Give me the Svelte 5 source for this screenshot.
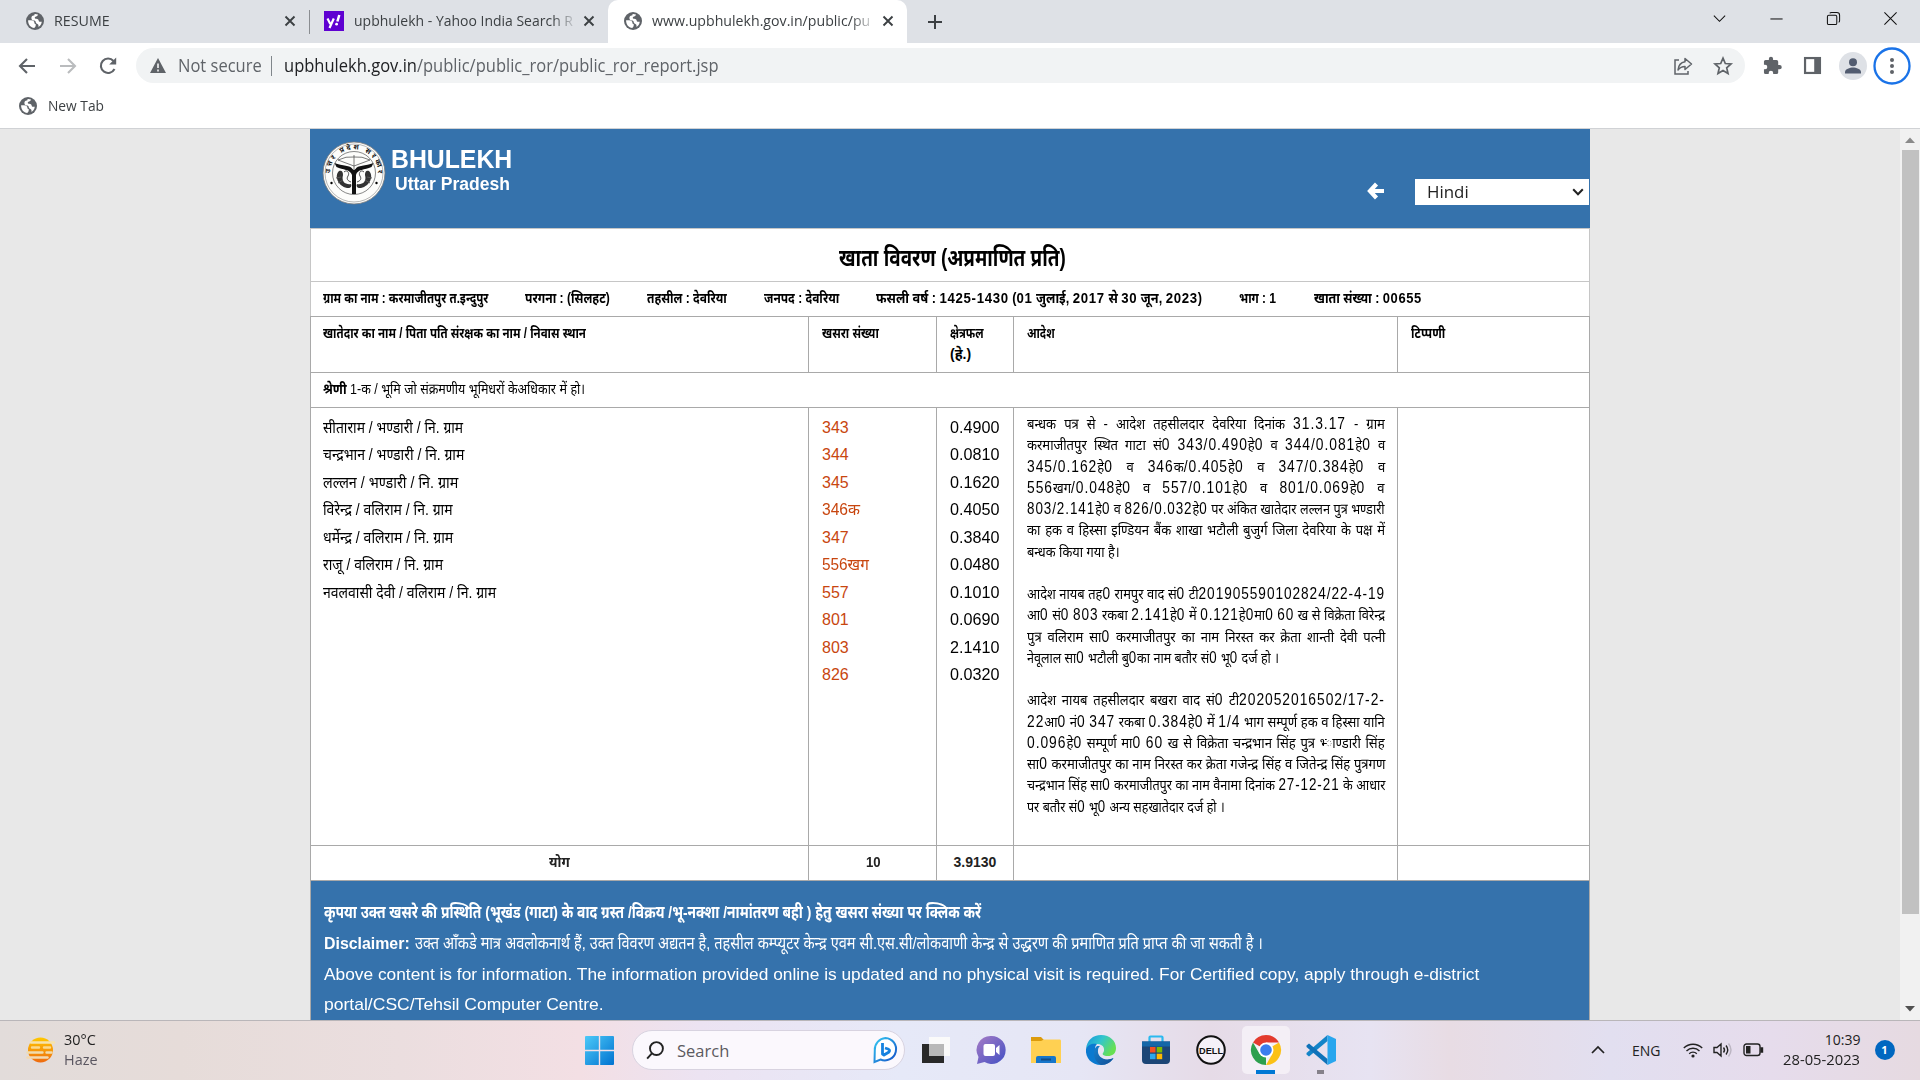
<script>
  // Scales a run of text horizontally so that it occupies the given width.
  function fit(node, width) {
    const natural = node.offsetWidth;
    if (!natural) return;
    node.style.transform = `scaleX(${width / natural})`;
    node.style.marginRight = `${width - natural}px`;
  }

  // Justifies one line: condenses it slightly, then widens its word gaps to fill the width.
  function justify(node, width) {
    const natural = node.offsetWidth;
    if (!natural) return;
    const scale = Math.min(0.87, width / natural);
    const gaps = node.textContent.split(' ').length - 1;
    node.style.wordSpacing = `${(width / scale - natural) / gaps}px`;
    node.style.transform = `scaleX(${scale})`;
    node.style.marginRight = `${width - width / scale}px`;
  }

  // Splits a line so that every odd part is a number.
  const runs = (text) => text.split(/([0-9./-]*[0-9][0-9./-]*)/);

  const info = [
    ['ग्राम का नाम : करमाजीतपुर त.इन्दुपुर', 165],
    ['परगना : (सिलहट)', 85],
    ['तहसील : देवरिया', 80],
    ['जनपद : देवरिया', 75],
    ['फसली वर्ष : 1425-1430 (01 जुलाई, 2017 से 30 जून, 2023)', 326],
    ['भाग : 1', 38],
    ['खाता संख्या : 00655', 108]
  ];
  const names = [
    ['सीताराम / भण्डारी / नि. ग्राम', 140],
    ['चन्द्रभान / भण्डारी / नि. ग्राम', 141],
    ['लल्लन / भण्डारी / नि. ग्राम', 135],
    ['विरेन्द्र / वलिराम / नि. ग्राम', 130],
    ['धर्मेन्द्र / वलिराम / नि. ग्राम', 130],
    ['राजू / वलिराम / नि. ग्राम', 120],
    ['नवलवासी देवी / वलिराम / नि. ग्राम', 173]
  ];
  const plots = [
    ['343', '0.4900', 27], ['344', '0.0810', 27], ['345', '0.1620', 27], ['346क', '0.4050', 38],
    ['347', '0.3840', 27], ['556खग', '0.0480', 47], ['557', '0.1010', 27], ['801', '0.0690', 27],
    ['803', '2.1410', 27], ['826', '0.0320', 27]
  ];
  // Each order is a list of justified lines; the closing line carries its own width.
  const orders = [
    {
      lines: [
        'बन्धक पत्र से - आदेश तहसीलदार देवरिया दिनांक 31.3.17 - ग्राम',
        'करमाजीतपुर स्थित गाटा सं0 343/0.490हे0 व 344/0.081हे0 व',
        '345/0.162हे0 व 346क/0.405हे0 व 347/0.384हे0 व',
        '556खग/0.048हे0 व 557/0.101हे0 व 801/0.069हे0 व',
        '803/2.141हे0 व 826/0.032हे0 पर अंकित खातेदार लल्लन पुत्र भण्डारी',
        'का हक व हिस्सा इण्डियन बैंक शाखा भटौली बुजुर्ग जिला देवरिया के पक्ष में'
      ],
      last: 'बन्धक किया गया है।',
      width: 93
    },
    {
      lines: [
        'आदेश नायब तह0 रामपुर वाद सं0 टी201905590102824/22-4-19',
        'आ0 सं0 803 रकबा 2.141हे0 में 0.121हे0मा0 60 ख से विक्रेता विरेन्द्र',
        'पुत्र वलिराम सा0 करमाजीतपुर का नाम निरस्त कर क्रेता शान्ती देवी पत्नी'
      ],
      last: 'नेवूलाल सा0 भटौली बु0का नाम बतौर सं0 भू0 दर्ज हो ।',
      width: 252
    },
    {
      lines: [
        'आदेश नायब तहसीलदार बखरा वाद सं0 टी202052016502/17-2-',
        '22आ0 नं0 347 रकबा 0.384हे0 में 1/4 भाग सम्पूर्ण हक व हिस्सा यानि',
        '0.096हे0 सम्पूर्ण मा0 60 ख से विक्रेता चन्द्रभान सिंह पुत्र भ्‍ाण्डारी सिंह',
        'सा0 करमाजीतपुर का नाम निरस्त कर क्रेता गजेन्द्र सिंह व जितेन्द्र सिंह पुत्रगण',
        'चन्द्रभान सिंह सा0 करमाजीतपुर का नाम वैनामा दिनांक 27-12-21 के आधार'
      ],
      last: 'पर बतौर सं0 भू0 अन्य सहखातेदार दर्ज हो ।',
      width: 198
    }
  ];
  const ORDER_WIDTH = 358;
</script>

{#snippet mixed(text)}{#each runs(text) as part, i}{#if i % 2}<span class="num">{part}</span>{:else}{part}{/if}{/each}{/snippet}
{#snippet globe()}
  <svg class="globe" viewBox="0 0 18 18"><circle cx="9" cy="9" r="9" fill="#5f6368" /><path d="M2.1 8.2 5 8.3c2.3.1 3.4.9 3.4 2.4 0 .9.5 1.2 1.3 1.3v1.5c0 1-.6 1.4-1.4 2.5C4.700 15.700 2 12.500 2.100 8.200ZM8.500 1.900C9.600 1.800 11 2 12 2.600c-.2 1.300-.9 1.700-2 1.800-.8.1-1.200.5-1.200 1.300 0 .7.5 1 1.300 1 2.100 0 2.500 1 2.600 2.100.1.700.6 1 1.200 1h1.900c-.4 2.400-1.600 4.300-3.300 5.200.2-1.800-.2-2.900-1.500-3.300-.9-.3-1.100-.7-1.200-1.400-.1-1.400-.8-1.900-2.100-1.900-1.500 0-2.300-.8-2.300-2.300 0-1.600.9-2.300 2.100-2.500.8-.2 1.200-.7 1-1.700Z" fill="#fff" /></svg>
{/snippet}
{#snippet cross()}
  <svg class="cross" viewBox="0 0 12 12"><path d="m1.500 1.500 9 9m0-9-9 9" stroke="#3c4043" stroke-width="1.900" /></svg>
{/snippet}

<div class="screen">
  <div class="tabs">
    <div class="tab t1">{@render globe()}<div class="label"><span class="f" use:fit={56}>RESUME</span></div>{@render cross()}</div>
    <div class="tab t2">
      <svg class="yahoo" viewBox="0 0 20 20"><rect width="20" height="20" fill="#5f01d1" /><path d="m3.500 7.500 2.800 5.500M9.800 7.500 5.500 17" stroke="#fff" stroke-width="2.200" /><path d="m15.300 4-1.900 6.500" stroke="#fff" stroke-width="2.500" /><circle cx="12.600" cy="13.200" r="1.400" fill="#fff" /></svg>
      <div class="label faded"><span class="f" use:fit={219}>upbhulekh - Yahoo India Search R</span></div>{@render cross()}
    </div>
    <div class="tab t3">{@render globe()}<div class="label faded"><span class="f" use:fit={218}>www.upbhulekh.gov.in/public/pu</span></div>{@render cross()}</div>
    <svg class="plus" viewBox="0 0 16 16"><path d="M8 1v14M1 8h14" stroke="#3c4043" stroke-width="2" /></svg>
    <div class="window">
      <svg viewBox="0 0 16 16"><path d="m2 5 6 6 6-6" /></svg>
      <svg viewBox="0 0 16 16"><path d="M1.500 8.500h13" /></svg>
      <svg viewBox="0 0 16 16"><rect x="1.500" y="4.500" width="10" height="10" rx="1.500" /><path d="M4 2.500Q4.500 1.500 6 1.500h5.500q3 0 3 3V10q0 1.500-1 2" /></svg>
      <svg viewBox="0 0 16 16"><path d="m1.500 1.500 13 13m0-13-13 13" /></svg>
    </div>
  </div>

  <div class="toolbar">
    <svg class="nav" viewBox="0 0 20 20"><path d="M18 10H3m7-7-7 7 7 7" stroke="#5f6368" /></svg>
    <svg class="nav" viewBox="0 0 20 20"><path d="M2 10h15m-7-7 7 7-7 7" stroke="#babcbe" /></svg>
    <svg class="nav" viewBox="0 0 20 20"><path d="M16.500 13A7.200 7.200 0 1 1 15.500 5" stroke="#5f6368" /><path d="M18.200 1.500v7h-7z" fill="#5f6368" /></svg>
    <div class="omnibox">
      <svg class="warn" viewBox="0 0 16 15"><path d="M8 0 16 15H0Z" fill="#5f6368" /><path d="M8 5.500v4.500M8 11.500v2" stroke="#fff" stroke-width="1.500" /></svg>
      <span class="f secure" use:fit={84}>Not secure</span>
      <i class="bar"></i>
      <span class="f url" use:fit={435}><b>upbhulekh.gov.in</b>/public/public_ror/public_ror_report.jsp</span>
      <svg class="share" viewBox="0 0 20 20"><path d="M6 4H2v14h13v-3" /><path d="M12 2.500 18.500 8 12 13.500V10.500C8.500 10.500 6.500 12 5 14c.4-4.500 3-7.500 7-8.200Z" stroke-linejoin="round" /></svg>
      <svg class="star" viewBox="0 0 20 20"><path d="m10 2.200 2.300 5.300 5.700.5-4.300 3.800 1.300 5.600-5-3-5 3 1.300-5.600L2 8l5.700-.5Z" /></svg>
    </div>
    <svg class="ext" viewBox="0 0 20 20"><path d="M17.500 9.500H16V6a1.800 1.800 0 0 0-1.800-1.800h-3.600V3a2.200 2.200 0 0 0-4.400 0v1.200H2.700A1.700 1.700 0 0 0 1 6v3.300h1.200a2.300 2.300 0 0 1 0 4.700H1v3.300A1.700 1.700 0 0 0 2.700 19H6v-1.200a2.300 2.300 0 0 1 4.700 0V19h3.500a1.800 1.800 0 0 0 1.800-1.700V14h1.500a2.200 2.200 0 0 0 0-4.500Z" fill="#5f6368" /></svg>
    <svg class="ext" viewBox="0 0 20 20"><path d="M1 1h18v18H1Z" fill="#5f6368" /><path d="M3.300 3.300h8.500v13.400H3.300Z" fill="#fff" /></svg>
    <svg class="avatar" viewBox="0 0 28 28"><circle cx="14" cy="14" r="14" fill="#dee1e6" /><circle cx="14" cy="10.300" r="4" fill="#525c70" /><path d="M6 21.500v-1.500c0-3 5-4.500 8-4.500s8 1.500 8 4.500v1.500Z" fill="#525c70" /></svg>
    <svg class="menu" viewBox="0 0 38 38"><circle cx="19" cy="19" r="17.500" fill="#fff" stroke="#1a73e8" stroke-width="2.300" /><g fill="#5f6368"><circle cx="19" cy="13" r="2" /><circle cx="19" cy="19" r="2" /><circle cx="19" cy="25" r="2" /></g></svg>
  </div>
  <div class="bookmarks">{@render globe()}<span class="f" use:fit={56}>New Tab</span></div>

  <div class="viewport">
    <main>
      <header>
        <svg class="emblem" viewBox="0 0 64 64">
          <defs><path id="rim" d="M10.500 43A24 24 0 1 1 53.500 43" /></defs>
          <circle cx="32" cy="32" r="31" fill="#fdfdfb" stroke="#777" stroke-width=".8" />
          <circle cx="32" cy="32" r="29" fill="none" stroke="#888" stroke-width=".6" />
          <circle cx="32" cy="32" r="21.500" fill="none" stroke="#555" stroke-width=".7" />
          <text><textPath href="#rim" startOffset="50%" text-anchor="middle" textLength="75">उत्तर प्रदेश सरकार</textPath></text>
          <path d="M16 19q8-4 16-3 8-1 16 3M16 19l16 6 16-6M32 14v14" fill="none" stroke="#444" stroke-width=".7" />
          <path d="M12.500 22c8 3 16 2 18 6 .6 1 2.400 1 3 0 2-4 10-3 18-6l-2 4c-7 3-14 2-15.500 8v19h-4V34C28 28 21 29 14.500 26Z" fill="#111" />
          <path d="M17 30c-5 5-1 15 8 17 4 .5 5-2 4-4-5 1-10-2-8-9 0-3-1-5-4-4Zm30 0c5 5 1 15-8 17-4 .5-5-2-4-4 5 1 10-2 8-9 0-3 1-5 4-4Z" fill="#333" />
          <path d="M22 31c3-3 6 1 4 4s0 5 3 6M42 31c-3-3-6 1-4 4s0 5-3 6M14 37l5-1m-3 6 5-3m29-2-5-1m3 6-5-3" fill="none" stroke="#555" />
          <circle cx="9.500" cy="42" r="1.200" /><circle cx="54.500" cy="42" r="1.200" />
        </svg>
        <div class="brand">
          <div class="b1"><span class="f" use:fit={121}>BHULEKH</span></div>
          <div class="b2"><span class="f" use:fit={115}>Uttar Pradesh</span></div>
        </div>
        <svg class="back" viewBox="0 0 18 18"><path d="M9.500 2 3 9l6.500 7M4 9h13" fill="none" stroke="#fff" stroke-width="4.200" /></svg>
        <div class="select"><span class="f" use:fit={42}>Hindi</span><svg viewBox="0 0 12 8"><path d="m1.200 1.200 4.800 5 4.800-5" fill="none" stroke="#222" stroke-width="2" /></svg></div>
      </header>

      <div class="title"><span class="f" use:fit={227}>खाता विवरण (अप्रमाणित प्रति)</span></div>
      <div class="info">{#each info as [text, width]}<span class="f" use:fit={width}>{@render mixed(text)}</span>{/each}</div>

      <div class="row heads">
        <div><span class="f" use:fit={263}>खातेदार का नाम / पिता पति संरक्षक का नाम / निवास स्थान</span></div>
        <div><span class="f" use:fit={57}>खसरा संख्या</span></div>
        <div><span class="f" use:fit={34}>क्षेत्रफल</span><br /><span class="f" use:fit={21}>(हे.)</span></div>
        <div><span class="f" use:fit={28}>आदेश</span></div>
        <div><span class="f" use:fit={34}>टिप्पणी</span></div>
      </div>
      <div class="class-row"><span class="f" use:fit={262}><b>श्रेणी</b> 1-क / भूमि जो संक्रमणीय भूमिधरों केअधिकार में हो।</span></div>

      <div class="row body">
        <div class="list">{#each names as [text, width]}<p><span class="f" use:fit={width}>{text}</span></p>{/each}</div>
        <div class="list plot">{#each plots as [no, , width]}<p><span class="f" use:fit={width}>{no}</span></p>{/each}</div>
        <div class="list">{#each plots as [, area]}<p><span class="f" use:fit={49.500}>{area}</span></p>{/each}</div>
        <div class="orders">
          {#each orders as order}
            <section>
              {#each order.lines as line}<p><span class="f" use:justify={ORDER_WIDTH}>{@render mixed(line)}</span></p>{/each}
              <p><span class="f" use:fit={order.width}>{@render mixed(order.last)}</span></p>
            </section>
          {/each}
        </div>
        <div></div>
      </div>
      <div class="row total">
        <div><span class="f" use:fit={21}>योग</span></div>
        <div><span class="f" use:fit={15}>10</span></div>
        <div><span class="f" use:fit={43}>3.9130</span></div>
        <div></div><div></div>
      </div>
      <footer>
        <p><b class="f" use:fit={657}>कृपया उक्त खसरे की प्रस्थिति (भूखंड (गाटा) के वाद ग्रस्त /विक्रय /भू-नक्शा /नामांतरण बही ) हेतु खसरा संख्या पर क्लिक करें</b></p>
        <p class="disclaimer"><b class="f" use:fit={86}>Disclaimer:</b><span class="f" use:fit={848}>उक्त आँकडे मात्र अवलोकनार्थ हैं, उक्त विवरण अद्यतन है, तहसील कम्प्यूटर केन्द्र एवम सी.एस.सी/लोकवाणी केन्द्र से उद्धरण की प्रमाणित प्रति प्राप्त की जा सकती है ।</span></p>
        <p><span class="f" use:fit={1155}>Above content is for information. The information provided online is updated and no physical visit is required. For Certified copy, apply through e-district</span></p>
        <p><span class="f" use:fit={279.500}>portal/CSC/Tehsil Computer Centre.</span></p>
      </footer>
    </main>
    <div class="scroll">
      <svg viewBox="0 0 10 6"><path d="m0 6 5-5.500L10 6Z" fill="#8a8a8a" /></svg>
      <i></i>
      <svg viewBox="0 0 10 6"><path d="m0 0 5 5.500L10 0Z" fill="#505050" /></svg>
    </div>
  </div>

  <div class="taskbar">
    <svg class="weather" viewBox="0 0 28 28"><defs><linearGradient id="sun" x2="0" y2="1"><stop stop-color="#ffc800" /><stop offset="1" stop-color="#ee6a10" /></linearGradient></defs><circle cx="14.500" cy="14" r="12.500" fill="url(#sun)" /><g stroke-linecap="round" stroke-width="2.400"><path d="M5 6.500h8M11 6.500h17" stroke="#f6e3ac" /><path d="M6 11.500h7m5 0h6" stroke="#fbd98c" /><path d="M1.500 16.500h15m4 0h5" stroke="#f0dcae" /><path d="M1.500 21.500h20" stroke="#f3d9b0" /></g></svg>
    <div class="temp"><span class="f" use:fit={32}>30°C</span><span class="f haze" use:fit={34}>Haze</span></div>
    <svg class="start" viewBox="0 0 29 29"><defs><linearGradient id="win" x2="1" y2="1"><stop stop-color="#4cc9f8" /><stop offset="1" stop-color="#0072d0" /></linearGradient></defs><path d="M1 0h12.800v13.800H0V1Q0 0 1 0Zm14.200 0H28q1 0 1 1v12.800H15.200ZM0 15.200h13.800V29H1q-1 0-1-1Zm15.200 0H29V28q0 1-1 1H15.200Z" fill="url(#win)" /></svg>
    <div class="search">
      <svg class="mag" viewBox="0 0 20 20"><circle cx="11" cy="8" r="6.800" /><path d="m6.200 13-5 5.500" /></svg>
      <span class="f" use:fit={52}>Search</span>
      <svg class="bing" viewBox="0 0 26 28"><defs><linearGradient id="bg" x2="1" y2="1"><stop stop-color="#35c9f2" /><stop offset="1" stop-color="#134fc7" /></linearGradient></defs><path d="M13.500 2a11.200 11.200 0 1 1-5 21.500L2.500 26l.3-12A11.500 11.500 0 0 1 13.500 2Z" fill="#fff" stroke="url(#bg)" stroke-width="2" /><path d="M10.500 7v11l1.500 1 5-3q1.500-2-1-3l-3-1" fill="none" stroke="#1682df" stroke-width="2.800" stroke-linejoin="round" /></svg>
    </div>
    <div class="apps">
      <div><svg viewBox="0 0 30 30"><path d="M1 9h22v19H1Z" fill="#292929" /><path d="M8 2h21v19H8Z" fill="#fafafa" /><path d="M8 9h15v12H8Z" fill="#b8b8b8" /></svg></div>
      <div><svg viewBox="0 0 30 30"><defs><linearGradient id="chat" x2="1" y2="1"><stop stop-color="#a67bc5" /><stop offset="1" stop-color="#4250c4" /></linearGradient></defs><path d="M15 1a14 14 0 1 1-6.500 26L1 29l1.500-7A14 14 0 0 1 15 1Z" fill="url(#chat)" /><rect x="7.500" y="9" width="11.500" height="12" rx="2" fill="#fff" /><path d="m20 13 3.500-3v10L20 17Z" fill="#fff" /></svg></div>
      <div><svg viewBox="0 0 30 30"><path d="M0 2h10l3 3h15v10H0Z" fill="#dc9b0c" /><path d="M0 6h10l3-1.500h16Q30 4.500 30 6v22H0Z" fill="#ffd052" /><path d="M5 28v-5q0-2 2-2h16q2 0 2 2v5Z" fill="#1676ca" /><path d="M10 24.500h10" stroke="#124b85" stroke-width="2" /></svg></div>
      <div><svg viewBox="0 0 30 30"><defs><linearGradient id="e1" x2="1" y2=".5"><stop stop-color="#1493dc" /><stop offset=".5" stop-color="#32c5cd" /><stop offset="1" stop-color="#67e052" /></linearGradient><linearGradient id="e2" x2="1" y2="1"><stop stop-color="#1782cf" /><stop offset="1" stop-color="#124d93" /></linearGradient></defs><path d="M0 14C1 5 7 0 15 0c9 0 15 6 15 13 0 6-4 8-8 8-5 0-6-2-5-3 2-2 2-9-6-9C6 9 2 11 0 14Z" fill="url(#e1)" /><path d="M0 14C2 9 7 8 11 9c-5 5 0 16 9 16 3 0 5-1 7.500-2C25 27 20.500 30 15 30 6 30-1 23 0 14Z" fill="#0b7ad0" /><path d="M11 11c-5 4-4 15 4 19 6 0 10-3 12.500-7C19 27 11 22 12 15c0-2 1-3 2-4Z" fill="url(#e2)" /></svg></div>
      <div><svg viewBox="0 0 30 30"><path d="M8.500 8V2.500q0-1 1-1h11q1 0 1 1V8" fill="none" stroke="#2bb9ef" stroke-width="2.200" /><path d="M1 6.500h28V25q0 4-4 4H5q-4 0-4-4Z" fill="#1c4676" /><path d="M1 6.500h28v5H1Z" fill="#1467a8" /><path d="M9 12h5.500v5.500H9Z" fill="#f25022" /><path d="M15.700 12h5.500v5.500h-5.500Z" fill="#7fba00" /><path d="M9 18.700h5.500v5.500H9Z" fill="#2aa8ed" /><path d="M15.700 18.700h5.500v5.500h-5.500Z" fill="#ffb900" /></svg></div>
      <div><svg viewBox="0 0 30 30"><circle cx="15" cy="15" r="13.800" fill="#f5f1f8" stroke="#111" stroke-width="2" /><text class="dell" x="15" y="18.500" text-anchor="middle" textLength="24" lengthAdjust="spacingAndGlyphs">DELL</text></svg></div>
      <div class="on"><svg viewBox="0 0 30 30"><path d="M15 15 2 7.500A15 15 0 0 1 28 7.500H15Z" fill="#e33b2e" /><path d="m15 15 13-7.500A15 15 0 0 1 15 30l6.500-11.300Z" fill="#fbc116" /><path d="M15 15v7.500L15 30A15 15 0 0 1 2 7.500L8.500 18.700Z" fill="#2da04e" /><circle cx="15" cy="15" r="7.500" fill="#fff" /><circle cx="15" cy="15" r="5.800" fill="#3b7ded" /></svg></div>
      <div class="code"><svg viewBox="0 0 30 30"><path d="M21.500 6 3 21.500.5 19.500v-1.500L21.500 0Z" fill="#1384c8" /><path d="M21.500 24 3 8.500.5 10.500V12l21 18Z" fill="#0f72b9" /><path d="m21.500 0 8.500 4v22l-8.500 4Z" fill="#28a6ee" /></svg></div>
    </div>
    <svg class="up" viewBox="0 0 14 8"><path d="m1 7 6-6 6 6" /></svg>
    <span class="f eng" use:fit={29}>ENG</span>
    <svg class="wifi" viewBox="0 0 20 16"><path d="M.800 6a13 13 0 0 1 18.400 0M3.500 9a9.200 9.200 0 0 1 13 0M6.200 11.700a5.400 5.400 0 0 1 7.600 0" /><circle cx="10" cy="14" r="1.600" fill="#222" stroke="none" /></svg>
    <svg class="vol" viewBox="0 0 20 16"><path d="M1 5.500h3L8 2v12L4 10.500H1ZM10.500 5.500q2 2.500 0 5M13 3.500q3.500 4.500 0 9" /><path d="M15.500 1.500q5 6.500 0 13" stroke="#bbb5c2" /></svg>
    <svg class="batt" viewBox="0 0 20 14"><rect x="1" y="1" width="16" height="11.500" rx="2.500" /><path d="M3 3h4.500v7.500H3Z" fill="#222" stroke="none" /><path d="M18 5h1.500v4H18Z" fill="#222" /></svg>
    <div class="clock"><span class="f" use:fit={36}>10:39</span><span class="f" use:fit={77}>28-05-2023</span></div>
    <div class="badge">1</div>
  </div>
</div>

<style>
  :global(body) { overflow: hidden; background: #fff; }
  .screen { width: 1920px; height: 1080px; display: flex; flex-direction: column; font-family: 'Open Sans', 'Noto Sans', sans-serif; color: #3c4043; overflow: hidden; }
  .screen :global(*) { box-sizing: border-box; }
  p { margin: 0; }
  svg { flex: none; display: block; overflow: visible; }
  .f { display: inline-block; white-space: nowrap; transform-origin: 0 50%; flex: none; }

  .tabs { height: 43px; flex: none; display: flex; align-items: center; background: #dee1e6; }
  .tab { height: 43px; display: flex; align-items: center; font-size: 15px; padding-bottom: 2px; }
  .globe { width: 18px; height: 18px; }
  .label { flex: 1; margin-left: 10px; height: 24px; line-height: 23px; }
  .faded { mask-image: linear-gradient(90deg, #000 90%, rgb(0 0 0 / 0.15) 100%); }
  .cross { width: 12px; height: 12px; margin-left: 9px; }
  .t1 { width: 311px; padding-left: 26px; padding-right: 14px; border-right: 1px solid #dee1e6; background: linear-gradient(#8a8d91, #8a8d91) right 10px / 1px 24px no-repeat; }
  .t2 { width: 297px; padding-left: 13px; padding-right: 13px; }
  .yahoo { width: 20px; height: 20px; }
  .t3 { width: 299px; padding-left: 16px; padding-right: 13px; background: #fff; border-radius: 10px 10px 0 0; }
  .plus { width: 16px; height: 16px; margin-left: 20px; }
  .window { margin-left: auto; margin-right: 22px; display: flex; gap: 42px; padding-bottom: 6px; }
  .window svg { width: 15px; height: 15px; fill: none; stroke: #111; stroke-width: 1.1; }

  .toolbar { height: 45px; flex: none; display: flex; align-items: center; padding-left: 17px; background: #fff; }
  .nav { width: 20px; height: 20px; margin-right: 20.5px; fill: none; stroke-width: 2.1; }
  .omnibox { width: 1609px; height: 35px; margin-left: -3px; border-radius: 18px; background: #f1f3f4; display: flex; align-items: center; padding-left: 14px; font-size: 17.5px; line-height: 32px; color: #5f6368; }
  .warn { width: 16px; height: 15px; }
  .omnibox .f { height: 34px; }
  .secure { margin-left: 12px; }
  .bar { width: 1px; height: 20px; background: #80868b; margin: 0 12px 0 10px; }
  .url { color: #5f6368; }
  .url b { font-weight: 400; color: #202124; }
  .share { width: 20px; height: 20px; margin-left: auto; fill: none; stroke: #5f6368; stroke-width: 1.5; }
  .star { width: 20px; height: 20px; margin: 0 12px 0 20px; fill: none; stroke: #5f6368; stroke-width: 1.7; }
  .ext { width: 19px; height: 19px; margin-left: 19px; margin-right: 2px; }
  .omnibox + .ext { margin-left: 18px; }
  .avatar { width: 28px; height: 28px; margin-left: 15px; }
  .menu { width: 38px; height: 38px; margin-left: 6.5px; }
  .bookmarks { height: 41px; flex: none; display: flex; align-items: center; gap: 11px; padding: 0 0 5px 19px; border-bottom: 1px solid #d0d2d5; font-size: 14.5px; background: #fff; }

  .viewport { height: 891px; flex: none; display: flex; background: #e8e8e8; overflow: hidden; }
  main { width: 1280px; margin-left: 310px; background: #fff; color: #000; font-family: 'Liberation Sans', 'Noto Sans Devanagari', 'Noto Sans', sans-serif; display: flex; flex-direction: column; }
  header { height: 99px; flex: none; background: #3572ac; color: #fff; display: flex; align-items: flex-start; font-weight: 700; }
  .emblem { width: 64px; height: 64px; margin: 12px 0 0 11.5px; }
  .emblem text { font-size: 7px; fill: #111; }
  .brand { margin-left: 5.5px; padding-top: 16px; }
  .b1 { font-size: 25px; line-height: 29px; }
  .b2 { font-size: 18px; line-height: 21px; padding-left: 3.5px; }
  .back { width: 18px; height: 18px; margin: 53px 30px 0 auto; }
  .select { width: 174px; height: 26px; margin-top: 50px; margin-right: 1px; background: #fff; color: #222; display: flex; align-items: center; justify-content: space-between; padding: 0 5px 0 11.5px; font: 400 16.5px/24px 'Open Sans', sans-serif; }
  .select svg { width: 12px; height: 8px; }
  .title { height: 53px; flex: none; border: 1px solid #c6c6c6; border-bottom: 0; display: flex; justify-content: center; padding-left: 4px; font-weight: 700; font-size: 24px; line-height: 57px; }
  .info { height: 35px; flex: none; border: 1px solid #c6c6c6; border-bottom: 0; padding-left: 12px; display: flex; gap: 37px; font-weight: 700; font-size: 14.5px; line-height: 33px; }
  .info .num { font-size: 1.04em; letter-spacing: 0.05em; line-height: 1; }
  .row { flex: none; display: grid; grid-template-columns: 498px 128px 77px 384px 193px; border-top: 1px solid #a9a9a9; }
  .row > div { border-left: 1px solid #a9a9a9; padding-left: 13px; min-width: 0; }
  .row > div:last-child { border-right: 1px solid #a9a9a9; }
  .row > div:first-child { padding-left: 12px; }
  .heads { height: 56px; font-weight: 700; font-size: 14px; line-height: 21px; }
  .heads > div { padding-top: 6px; }
  .class-row { height: 35px; flex: none; border: 1px solid #a9a9a9; border-bottom: 0; padding-left: 12px; font-size: 15px; line-height: 31px; }
  .body { height: 438px; }
  .list { padding-top: 6px; font-size: 16px; }
  .list p { height: 27.45px; line-height: 27.45px; }
  .plot { color: #c8460f; }
  .orders { padding-top: 5px; font-size: 15px; }
  .orders .num { font-size: 1.06em; line-height: 1; letter-spacing: 0.07em; }
  .orders p { height: 21.26px; line-height: 21.26px; }
  .orders section + section { margin-top: 21.26px; }
  .total { height: 36px; border-bottom: 1px solid #a9a9a9; font-weight: 700; font-size: 14px; line-height: 33px; color: #222; }
  .row.total > div { padding-left: 0; text-align: center; }
  .row.total > div:nth-child(2) { padding-left: 1px; }
  footer { flex: 1; background: #3572ac; color: #fff; padding: 17px 0 0 13px; font-size: 17px; border: solid #a9a9a9; border-width: 0 1px; }
  footer p { height: 30.800px; line-height: 30.800px; }
  .disclaimer { display: flex; gap: 5px; }
  .scroll { width: 20px; margin-left: 310px; background: #f1f1f1; display: flex; flex-direction: column; align-items: center; }
  .scroll svg { width: 10px; height: 6px; margin-top: 8px; }
  .scroll i { width: 17px; height: 764px; background: #c1c1c1; margin: 7px 0 84px; }

  .taskbar { height: 60px; flex: none; display: flex; align-items: center; border-top: 1px solid #b9b6b9; background: linear-gradient(90deg, #e2dcda 0, #e6dcd9 180px, #ebdedf 400px, #f3dfe4 580px, #ece3f2 700px, #e6e9f8 900px, #e6e6f5 1080px, #e6dbe7 1210px, #e7e3f2 1370px, #e8dce4 1450px, #e2dff0 1610px, #e6dcec 1770px, #e6dae1 1920px); color: #222; font-size: 14px; padding-bottom: 1px; }
  .weather { width: 28px; height: 28px; margin-left: 26px; }
  .temp { width: 120px; margin-left: 10px; display: flex; flex-direction: column; align-items: flex-start; line-height: 20px; padding-bottom: 1px; }
  .haze { color: #5a5660; }
  .start { width: 29px; height: 29px; margin-left: 401px; }
  .search { width: 273px; height: 40px; margin-left: 18px; border-radius: 20px; border: 1px solid #d8d3e0; background: #fbf8fd; display: flex; align-items: center; padding: 0 6px 0 13px; font-size: 16.5px; color: #5c5a60; }
  .mag { width: 19px; height: 19px; margin-right: 12px; fill: none; stroke: #222; stroke-width: 2; }
  .bing { width: 26px; height: 28px; margin-left: auto; }
  .apps { display: flex; gap: 7px; margin-left: 6.5px; }
  .apps div { width: 48px; height: 48px; display: grid; place-items: center; border-radius: 5px; }
  .apps svg { width: 30px; height: 30px; }
  .apps .on { background: linear-gradient(#0078d4, #0078d4) center bottom / 19px 4px no-repeat, #f4eff6; }
  .apps .code { background: linear-gradient(#85818a, #85818a) center bottom / 7px 4px no-repeat; }
  .dell { font: 700 9.5px 'Liberation Sans', sans-serif; fill: #111; }
  .up { width: 14px; height: 8px; margin-left: 246.5px; fill: none; stroke: #222; stroke-width: 1.7; }
  .eng { margin-left: 27px; }
  .wifi { width: 20px; height: 16px; margin-left: 22px; }
  .vol { width: 20px; height: 16px; margin-left: 10px; }
  .batt { width: 20px; height: 14px; margin-left: 10px; }
  .wifi, .vol, .batt { fill: none; stroke: #222; stroke-width: 1.4; }
  .clock { width: 98px; display: flex; flex-direction: column; align-items: flex-end; line-height: 20px; padding-bottom: 1px; }
  .badge { width: 20px; height: 20px; margin-left: 14px; border-radius: 50%; background: #0067c0; color: #fff; font-size: 11px; font-weight: 700; line-height: 20px; text-align: center; }
</style>
